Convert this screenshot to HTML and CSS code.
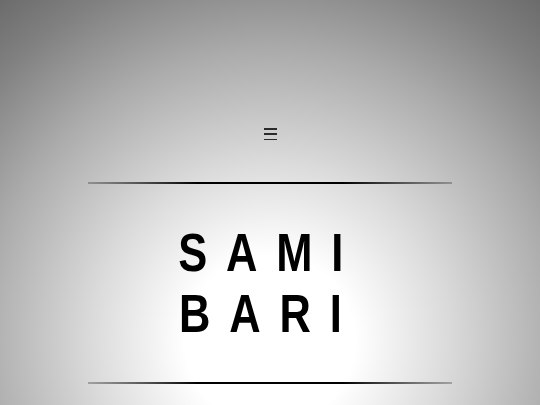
FILE: index.html
```html
<!DOCTYPE html>
<html>
<head>
<meta charset="utf-8">
<link rel="stylesheet" href="styles.css">
</head>
<body>
<div class="page">
  <button class="menu" aria-label="Menu"><span></span><span></span><span></span></button>
  <hr class="rule rule-top">
  <h1 class="title"><span class="line">SAMI</span><span class="line">BARI</span></h1>
  <hr class="rule rule-bottom">
</div>
</body>
</html>
```
FILE: styles.css
```css
html, body {
  margin: 0;
  padding: 0;
  height: 100%;
}
body {
  background: radial-gradient(circle at 50% 84%, #ffffff 0px, #ffffff 85px, #dadada 180px, #ababab 290px, #808080 380px, #5a5a5a 480px);
  overflow: hidden;
  font-family: "Liberation Sans", Arial, sans-serif;
}
.page {
  height: 405px;
  display: flex;
  flex-direction: column;
  align-items: center;
  padding-top: 128px;
  box-sizing: border-box;
}
.menu {
  background: none;
  border: 0;
  padding: 0;
  width: 13px;
  height: 12px;
  display: flex;
  flex-direction: column;
  justify-content: space-between;
}
.menu span {
  display: block;
  height: 1.5px;
  background: #2a2a2a;
}
.rule {
  border: 0;
  width: 364px;
  height: 2px;
  margin: 0;
  background: linear-gradient(to right, rgba(0,0,0,0.25), #000 30%, #000 70%, rgba(0,0,0,0.25));
}
.rule-top {
  margin-top: 42px;
}
.title {
  margin: 0;
  height: 198px;
  display: flex;
  flex-direction: column;
  justify-content: center;
  align-items: center;
  font-weight: bold;
  font-size: 53px;
  line-height: 61px;
  letter-spacing: 23px;
  color: #000;
}
.line {
  display: block;
  transform: scaleX(0.82);
}
```
